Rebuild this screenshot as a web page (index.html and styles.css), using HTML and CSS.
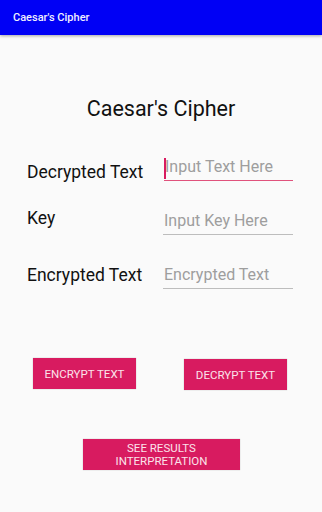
FILE: index.html
```html
<!DOCTYPE html>
<html>
<head>
<meta charset="utf-8">
<link rel="stylesheet" href="styles.css">
</head>
<body>
<header class="appbar"><span class="appbar-title">Caesar's Cipher</span></header>
<main class="content">
  <h1 class="heading">Caesar's Cipher</h1>
  <div class="form">
    <div class="row row-1">
      <label class="label label-1">Decrypted Text</label>
      <div class="field field-focus"><span class="caret"></span><span class="placeholder">Input Text Here</span></div>
    </div>
    <div class="row row-2">
      <label class="label label-key">Key</label>
      <div class="field"><span class="placeholder">Input Key Here</span></div>
    </div>
    <div class="row row-3">
      <label class="label label-3">Encrypted Text</label>
      <div class="field"><span class="placeholder">Encrypted Text</span></div>
    </div>
  </div>
  <div class="actions">
    <button class="btn btn-encrypt">ENCRYPT TEXT</button>
    <button class="btn btn-decrypt">DECRYPT TEXT</button>
  </div>
  <div class="results">
    <button class="btn btn-results">SEE RESULTS<br>INTERPRETATION</button>
  </div>
</main>
</body>
</html>
```
FILE: styles.css
```css
* { box-sizing: border-box; }
html, body { margin: 0; padding: 0; }
body {
  width: 322px;
  height: 512px;
  background: #fafafa;
  font-family: Roboto, "Noto Sans", sans-serif;
  overflow: hidden;
}
.appbar {
  height: 35px;
  background: #0000f5;
  display: flex;
  align-items: center;
  padding-left: 13px;
  box-shadow: 0 1px 3px rgba(0,0,0,0.35);
  position: relative;
}
.appbar-title {
  color: #f0f0ff;
  font-size: 11px;
  font-weight: 500;
}
.content {
  display: flex;
  flex-direction: column;
}
.heading {
  margin: 60px 0 0 0;
  text-align: center;
  font-size: 21.5px;
  font-weight: 400;
  color: #111;
  line-height: 28px;
}
.form {
  display: flex;
  flex-direction: column;
  margin-top: 30px;
}
.row {
  display: grid;
  grid-template-columns: 136px 130px;
  padding-left: 27px;
  align-items: start;
}
.row-2 { margin-top: 24px; }
.row-3 { margin-top: 26px; }
.label {
  font-size: 17.5px;
  color: #111;
  line-height: 22px;
}
.label-1 { padding-top: 8px; }
.label-key { padding-top: 0; }
.label-3 { padding-top: 3px; }
.field {
  position: relative;
  height: 28px;
  border-bottom: 1px solid #bdbdbd;
  display: flex;
  align-items: flex-end;
  padding-bottom: 3px;
}
.field-focus {
  border-bottom: 1.5px solid #e0527c;
  margin-left: 1px;
}
.caret {
  position: absolute;
  left: 0;
  top: 5px;
  bottom: 1px;
  width: 1.5px;
  background: #d81b60;
}
.placeholder {
  font-size: 16px;
  color: #9e9e9e;
  padding-left: 1px;
  line-height: 20px;
}
.actions {
  display: flex;
  justify-content: space-between;
  align-items: flex-start;
  padding: 0 35px 0 33px;
  margin-top: 69px;
}
.btn {
  background: #d81b60;
  color: #fbe3ea;
  border: none;
  font-family: Roboto, "Noto Sans", sans-serif;
  font-size: 11.5px;
  font-weight: 400;
  height: 31px;
  width: 103px;
  padding: 0;
  box-shadow: 0 0 1px rgba(0,0,0,0.3);
}
.btn-decrypt { margin-top: 1px; }
.results {
  display: flex;
  justify-content: center;
  margin-top: 49px;
  padding-left: 1px;
}
.btn-results {
  width: 157px;
  line-height: 13px;
}
```
